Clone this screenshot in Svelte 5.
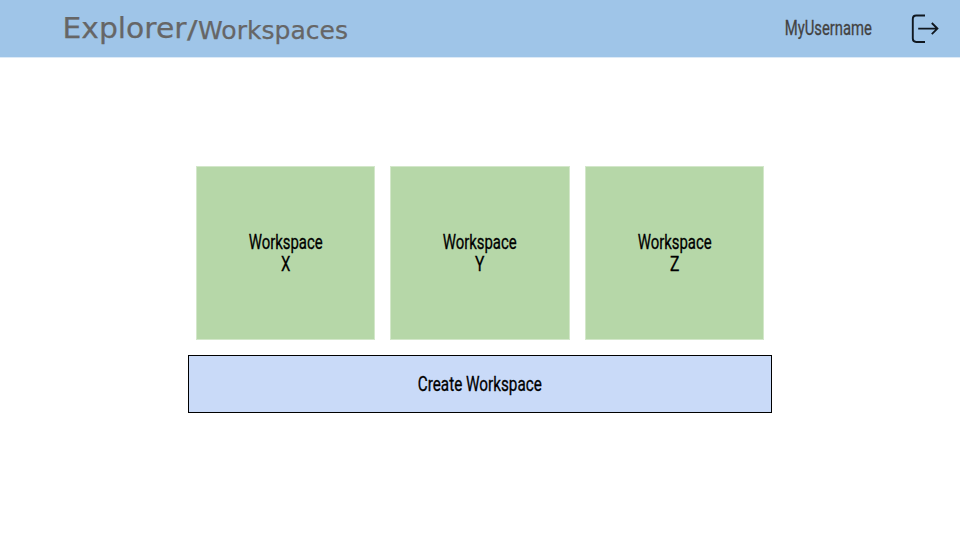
<script>
  const workspaces = ['X', 'Y', 'Z'];
</script>

<div class="page">
  <header>
    <svg class="title" width="300" height="56" viewBox="0 0 300 56" role="heading" aria-level="1">
      <text x="-1.5" y="38.3" font-size="29" textLength="124" lengthAdjust="spacingAndGlyphs">Explorer</text>
      <text x="123" y="38" font-size="24" textLength="10.5" lengthAdjust="spacingAndGlyphs">/</text>
      <text x="134" y="38.5" font-size="24.5" textLength="150" lengthAdjust="spacingAndGlyphs">Workspaces</text>
    </svg>
    <div class="account">
      <svg class="narrow user" width="90" height="56" viewBox="0 0 90 56">
        <text x="0.7" y="35.3" font-size="20.5" textLength="87.3" lengthAdjust="spacingAndGlyphs">MyUsername</text>
      </svg>
      <button class="logout" aria-label="Log out">
        <svg width="30" height="32" viewBox="0 0 30 32" fill="none" stroke="#101820" stroke-width="1.9">
          <path d="M15 2.5H6.2Q2.8 2.5 2.8 6V25.6Q2.8 29 6.2 29H15" />
          <path d="M8.2 15.6H27M21.8 10L27.4 15.6L21.8 21.2" />
        </svg>
      </button>
    </div>
  </header>

  <main>
    <div class="cards">
      {#each workspaces as name}
        <div class="card">
          <svg class="narrow" width="76" height="27" viewBox="0 0 76 27">
            <text x="0.7" y="19.6" font-size="20.5" textLength="74" lengthAdjust="spacingAndGlyphs">Workspace</text>
          </svg>
          <svg class="narrow" width="76" height="22" viewBox="0 0 76 22">
            <text x="33" y="14.8" font-size="20.5" textLength="9.4" lengthAdjust="spacingAndGlyphs">{name}</text>
          </svg>
        </div>
      {/each}
    </div>
    <button class="create">
      <svg class="narrow" width="126" height="30" viewBox="0 0 126 30">
        <text x="0.8" y="21.7" font-size="20.5" textLength="124" lengthAdjust="spacingAndGlyphs">Create Workspace</text>
      </svg>
    </button>
  </main>
</div>

<style>
  .page {
    width: 960px;
    height: 540px;
    background: #fff;
    overflow: hidden;
  }
  svg {
    display: block;
    overflow: visible;
  }
  button {
    padding: 0;
    background: none;
    border: 0;
    border-radius: 0;
  }
  header {
    box-sizing: border-box;
    height: 58px;
    padding: 0 20px 0 64px;
    display: flex;
    justify-content: space-between;
    background: #9fc5e8;
    border-bottom: 1px solid #dceaf7;
  }
  .title {
    font-family: "DejaVu Sans", sans-serif;
    fill: #666;
    stroke: #666;
    stroke-width: 0.25;
  }
  .narrow {
    font-family: Roboto, sans-serif;
    font-weight: 400;
    fill: #000;
    stroke: #000;
    stroke-width: 0.3;
  }
  .user {
    fill: #434343;
    stroke: #434343;
  }
  .account {
    display: flex;
    gap: 36px;
  }
  .logout {
    height: 32px;
    margin-top: 13px;
  }
  main {
    width: 584px;
    margin: 108px auto 0;
  }
  .cards {
    display: flex;
    justify-content: space-between;
    padding: 0 8px;
  }
  .card {
    box-sizing: border-box;
    width: 179px;
    height: 174px;
    padding-top: 62px;
    display: flex;
    flex-direction: column;
    align-items: center;
    background: #b6d7a8;
    border: 1px solid #d3e7ca;
  }
  .card:nth-child(2) {
    width: 180px;
  }
  .create {
    box-sizing: border-box;
    width: 584px;
    height: 58px;
    margin-top: 15px;
    display: flex;
    align-items: center;
    justify-content: center;
    background: #c9daf8;
    border: 1px solid #000;
  }
</style>
